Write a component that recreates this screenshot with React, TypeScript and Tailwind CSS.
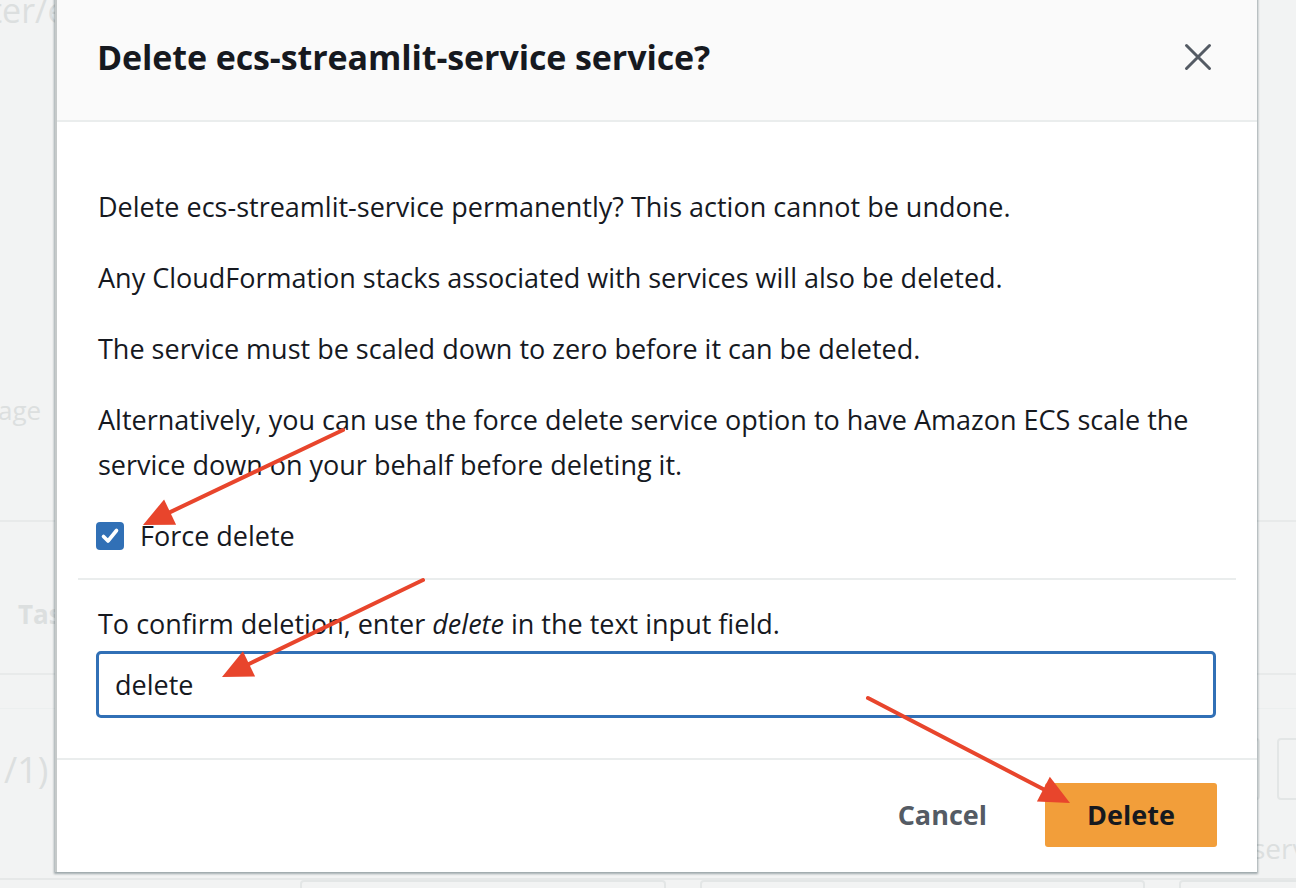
import React from "react";

function Arrow({ x1, y1, x2, y2 }: { x1: number; y1: number; x2: number; y2: number }) {
  const dx = x2 - x1;
  const dy = y2 - y1;
  const len = Math.sqrt(dx * dx + dy * dy);
  const ux = dx / len;
  const uy = dy / len;
  const headLen = 30;
  const headW = 14;
  const bx = x2 - ux * headLen;
  const by = y2 - uy * headLen;
  const p1 = `${bx - uy * headW},${by + ux * headW}`;
  const p2 = `${bx + uy * headW},${by - ux * headW}`;
  return (
    <g>
      <line x1={x1} y1={y1} x2={bx + ux * 4} y2={by + uy * 4} stroke="#e8452c" strokeWidth={4} strokeLinecap="round" />
      <polygon points={`${x2},${y2} ${p1} ${p2}`} fill="#e8452c" />
    </g>
  );
}

function Backdrop() {
  return (
    <div className="w-full h-full flex flex-col text-[#dcdfdf]">
      <div className="h-[522px] shrink-0 border-b-2 border-[#e8eaea] flex justify-between">
        <div className="flex flex-col">
          <div className="ml-[-10px] mt-[-14px] text-[34px] leading-[48px]">ter/e</div>
          <div className="ml-[-2px] mt-[358px] text-[26px] leading-[36px]">age</div>
        </div>
      </div>
      <div className="h-[153px] shrink-0 border-b-2 border-[#e8eaea] flex items-center pl-[18px] pt-[34px]">
        <span className="text-[26px] font-bold">Tas</span>
      </div>
      <div className="h-[34px] shrink-0 border-b border-[#ecefef]" />
      <div className="h-[171px] shrink-0 border-b-2 border-[#e6e8e8] flex">
        <div className="pl-[4px] pt-[36px] text-[36px] leading-[50px]">/1)</div>
        <div className="ml-auto mt-[29px] flex flex-col items-start">
          <div className="flex gap-[17px]">
            <div className="w-[80px] h-[62px] rounded-[4px] border-2 border-[#e3e6e6]" />
            <div className="w-[80px] h-[62px] rounded-[4px] border-2 border-[#e3e6e6] mr-[-61px]" />
          </div>
          <div className="ml-[72px] mt-[30px] text-[28px] leading-[36px] whitespace-nowrap mr-[-100px]">serv</div>
        </div>
      </div>
      <div className="flex-1 flex gap-[34px] pl-[300px]">
        <div className="w-[366px] shrink-0 h-[30px] rounded-[4px] border-2 border-[#e3e6e6]" />
        <div className="w-[445px] shrink-0 h-[30px] rounded-[4px] border-2 border-[#e3e6e6]" />
        <div className="w-[200px] shrink-0 h-[30px] rounded-[4px] border-2 border-[#e3e6e6]" />
      </div>
    </div>
  );
}

export default function App() {
  const font = { fontFamily: '"Open Sans", "Noto Sans", sans-serif' };
  return (
    <div className="relative w-[1296px] h-[888px] overflow-hidden bg-[#f2f3f3]" style={font}>
      <Backdrop />

      {/* dialog overlay */}
      <div className="absolute left-[55px] top-[-10px] w-[1202px] h-[882px] bg-white flex flex-col shadow-[0_1px_2px_1px_rgba(0,28,36,0.35)] border-l-2 border-[#c5c9c9]">
        <div className="h-[132px] shrink-0 bg-[#fafafa] border-b-2 border-[#eaeded] flex items-center justify-between pl-[40px] pr-[45px] pt-[4px]">
          <h1 className="text-[34px] font-bold text-[#16191f] tracking-[-0.1px]">Delete ecs-streamlit-service service?</h1>
          <svg width="28" height="28" viewBox="0 0 28 28">
            <path d="M2.5 2.5 L25.5 25.5 M25.5 2.5 L2.5 25.5" stroke="#545b64" strokeWidth="3" strokeLinecap="round" />
          </svg>
        </div>

        <div className="flex-1 px-[21px] pt-[62px] text-[#16191f] text-[27px] leading-[45px]">
          <div className="px-[20px]">
            <p>Delete ecs-streamlit-service permanently? This action cannot be undone.</p>
            <p className="mt-[26px]">Any CloudFormation stacks associated with services will also be deleted.</p>
            <p className="mt-[26px]">The service must be scaled down to zero before it can be deleted.</p>
            <p className="mt-[26px]">Alternatively, you can use the force delete service option to have Amazon ECS scale the service down on your behalf before deleting it.</p>
            <label className="mt-[26px] flex items-center gap-[16px] ml-[-2px]">
              <span className="w-[28px] h-[28px] rounded-[4px] bg-[#3170b6] flex items-center justify-center">
                <svg width="20" height="20" viewBox="0 0 20 20">
                  <path d="M3.5 10.5 L8 15 L16.5 4.5" stroke="#fff" strokeWidth="3.6" fill="none" strokeLinecap="round" strokeLinejoin="round" />
                </svg>
              </span>
              <span>Force delete</span>
            </label>
          </div>
          <div className="mt-[20px] h-[2px] bg-[#eaeded]" />
          <div className="px-[20px] pt-[21px]">
            <p>
              To confirm deletion, enter <i>delete</i> in the text input field.
            </p>
            <div className="mt-[5px] ml-[-2px] h-[67px] rounded-[5px] border-[3px] border-[#3170b6] flex items-center pl-[16px]">
              delete
            </div>
          </div>
        </div>

        <div className="h-[114px] shrink-0 border-t-2 border-[#eaeded] flex items-center justify-end pr-[40px] gap-[58px] pb-[2px]">
          <span className="text-[27px] font-bold text-[#545b64]">Cancel</span>
          <span className="w-[172px] h-[64px] rounded-[3px] bg-[#f29e3a] flex items-center justify-center text-[27px] font-bold text-[#16191f]">
            Delete
          </span>
        </div>
      </div>

      {/* annotation arrows drawn over the screenshot */}
      <svg className="absolute inset-0 pointer-events-none" width="1296" height="888">
        <Arrow x1={343} y1={430} x2={143} y2={525} />
        <Arrow x1={423} y1={580} x2={222} y2={677} />
        <Arrow x1={868} y1={698} x2={1070} y2={803} />
      </svg>
    </div>
  );
}
